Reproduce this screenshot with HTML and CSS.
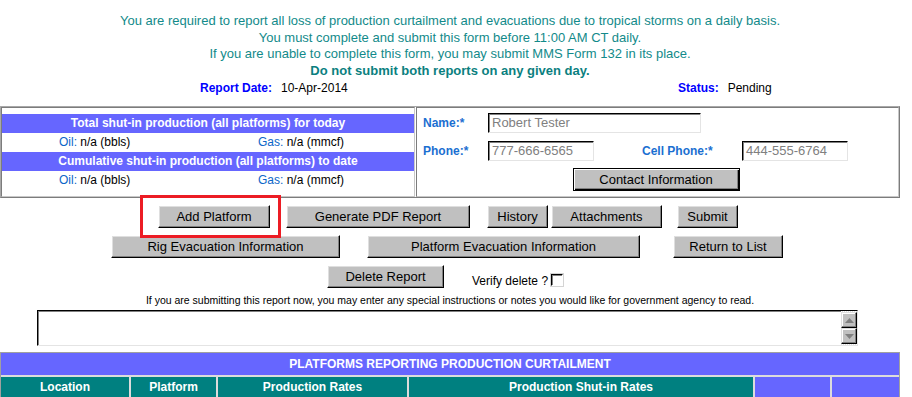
FILE: index.html
```html
<!DOCTYPE html>
<html>
<head>
<meta charset="utf-8">
<link rel="stylesheet" href="styles.css">
</head>
<body>
<div class="page">
  <div class="intro">
    <div>You are required to report all loss of production curtailment and evacuations due to tropical storms on a daily basis.</div>
    <div>You must complete and submit this form before 11:00 AM CT daily.</div>
    <div>If you are unable to complete this form, you may submit MMS Form 132 in its place.</div>
    <div class="strong">Do not submit both reports on any given day.</div>
  </div>

  <div class="meta">
    <div class="meta-left"><span class="meta-label">Report Date:</span><span class="meta-value">10-Apr-2014</span></div>
    <div><span class="meta-label">Status:</span><span class="meta-value">Pending</span></div>
  </div>

  <div class="summary">
    <div class="cell totals">
      <div class="band">Total shut-in production (all platforms) for today</div>
      <div class="amounts"><span class="amt"><span class="lbl">Oil:</span> n/a (bbls)</span><span class="amt"><span class="lbl">Gas:</span> n/a (mmcf)</span></div>
      <div class="band">Cumulative shut-in production (all platforms) to date</div>
      <div class="amounts"><span class="amt"><span class="lbl">Oil:</span> n/a (bbls)</span><span class="amt"><span class="lbl">Gas:</span> n/a (mmcf)</span></div>
    </div>
    <div class="cell contact">
      <div class="crow">
        <span class="clabel">Name:*</span>
        <span class="field w-name">Robert Tester</span>
      </div>
      <div class="crow crow2">
        <span class="clabel">Phone:*</span>
        <span class="field w-phone">777-666-6565</span>
        <span class="clabel cell-lbl">Cell Phone:*</span>
        <span class="field w-phone">444-555-6764</span>
      </div>
      <div class="crow crow3">
        <span class="btn btn-default w-contact">Contact Information</span>
      </div>
    </div>
  </div>

  <div class="actions">
    <div class="brow brow1">
      <span class="highlight"><span class="btn w-add">Add Platform</span></span>
      <span class="btn w-pdf g16">Generate PDF Report</span>
      <span class="btn w-hist g17">History</span>
      <span class="btn w-att g3">Attachments</span>
      <span class="btn w-sub g15">Submit</span>
    </div>
    <div class="brow brow2">
      <span class="btn w-rig">Rig Evacuation Information</span>
      <span class="btn w-plat g27">Platform Evacuation Information</span>
      <span class="btn w-ret g33">Return to List</span>
    </div>
    <div class="brow brow3">
      <span class="btn w-del">Delete Report</span>
      <span class="verify">Verify delete ?</span>
      <span class="checkbox"></span>
    </div>
  </div>

  <div class="notes-text">If you are submitting this report now, you may enter any special instructions or notes you would like for government agency to read.</div>
  <div class="notes">
    <div class="notes-area"></div>
    <div class="scroll">
      <span class="sbtn"><svg width="9" height="5" viewBox="0 0 9 5"><path d="M4.5 0L9 5H0z" fill="#808080"/></svg></span>
      <span class="sbtn"><svg width="9" height="5" viewBox="0 0 9 5"><path d="M0 0H9L4.5 5z" fill="#808080"/></svg></span>
    </div>
  </div>

  <div class="platforms">
    <div class="phead">PLATFORMS REPORTING PRODUCTION CURTAILMENT</div>
    <div class="col">Location</div>
    <div class="col">Platform</div>
    <div class="col">Production Rates</div>
    <div class="col">Production Shut-in Rates</div>
    <div class="col blank"></div>
    <div class="col blank"></div>
  </div>
</div>
</body>
</html>
```

FILE: styles.css
```css
* { box-sizing: border-box; }
html, body { margin: 0; padding: 0; background: #fff; }
body { font-family: "Liberation Sans", Arial, sans-serif; color: #000; }
.page { width: 900px; }

.intro {
  padding-top: 13px;
  text-align: center;
  font-size: 13px;
  line-height: 16.6px;
  color: #128a8a;
}
.intro .strong { font-weight: bold; color: #0b7f80; }

.meta {
  margin-top: 1px;
  display: grid;
  grid-template-columns: 678px auto;
  font-size: 12px;
  line-height: 16px;
}
.meta-left { padding-left: 200px; }
.meta-label { color: #0000ff; font-weight: bold; margin-right: 9px; }
.meta-value { color: #000; }

.summary {
  margin-top: 10px;
  display: flex;
  gap: 1px;
  border: 1px solid;
  border-color: #a8a8a8 #7c7c7c #7c7c7c #a8a8a8;
}
.cell {
  border: 1px solid;
  border-color: #7c7c7c #c8c8c8 #c8c8c8 #7c7c7c;
}
.totals {
  width: 414px;
  display: flex;
  flex-direction: column;
  justify-content: center;
  padding: 0;
}
.band {
  height: 19px;
  line-height: 19px;
  background: #6666ff;
  color: #fff;
  font-weight: bold;
  font-size: 12px;
  text-align: center;
}
.amounts {
  height: 19px;
  line-height: 19px;
  font-size: 12px;
  display: grid;
  grid-template-columns: 199px auto;
  padding-left: 57px;
}
.lbl { color: #0b66c8; }

.contact {
  flex: 1;
  padding: 5px 6px;
  height: 90px;
}
.crow { display: flex; align-items: center; height: 20px; }
.crow2 { margin-top: 8px; }
.crow3 { margin-top: 7px; height: 23px; justify-content: center; padding-right: 3px; }
.clabel {
  width: 65px;
  font-size: 12px;
  font-weight: bold;
  color: #1b6fd1;
}
.cell-lbl { margin-left: 48px; width: 100px; }
.field {
  height: 20px;
  border: 1px solid;
  border-color: #000 #e4e4e4 #e4e4e4 #000;
  box-shadow: inset 1px 1px 0 #808080;
  font-size: 13px;
  color: #808080;
  line-height: 18px;
  padding-left: 3px;
  white-space: nowrap;
  overflow: hidden;
}
.w-name { width: 213px; }
.w-phone { width: 106px; }

.btn {
  display: inline-flex;
  align-items: center;
  justify-content: center;
  height: 23px;
  background: #c0c0c0;
  border: 1px solid;
  border-color: #fff #000 #000 #fff;
  box-shadow: inset -1px -1px 0 #808080, inset 1px 1px 0 #dfdfdf;
  font-size: 13px;
  color: #000;
  white-space: nowrap;
  flex: none;
}
.btn-default {
  border: 1px solid #000;
  box-shadow: inset 1px 1px 0 #fff, inset -1px -1px 0 #000, inset -2px -2px 0 #808080;
}
.w-contact { width: 167px; }

.actions { margin-top: 7px; }
.brow { display: flex; align-items: center; height: 23px; }
.brow + .brow { margin-top: 7px; }
.brow1 { padding-left: 158px; }
.brow2 { padding-left: 111px; }
.brow3 { padding-left: 327px; }
.w-add { width: 112px; }
.w-pdf { width: 184px; }
.w-hist { width: 61px; }
.w-att { width: 111px; }
.w-sub { width: 61px; }
.w-rig { width: 229px; }
.w-plat { width: 273px; }
.w-ret { width: 110px; }
.w-del { width: 117px; }
.g3 { margin-left: 3px; }
.g15 { margin-left: 15px; }
.g16 { margin-left: 16px; }
.g17 { margin-left: 17px; }
.g27 { margin-left: 27px; }
.g33 { margin-left: 33px; }

.highlight { position: relative; display: inline-flex; }
.highlight::after {
  content: "";
  position: absolute;
  top: -10px;
  bottom: -10px;
  left: -18px;
  right: -11px;
  border: 3px solid #ec1c24;
  pointer-events: none;
}

.verify {
  margin-left: 28px;
  font-size: 12px;
  align-self: flex-end;
  line-height: 14px;
  margin-bottom: 0;
}
.checkbox {
  width: 12px;
  height: 12px;
  margin-left: 3px;
  align-self: flex-end;
  margin-bottom: 2px;
  border: 1px solid;
  border-color: #000 #fff #fff #000;
  box-shadow: 1px 1px 0 #808080 inset;
  outline: 1px solid #d4d4d4;
  background: #fff;
}

.notes-text {
  margin-top: 6px;
  text-align: center;
  font-size: 10.5px;
  line-height: 12px;
}
.notes {
  margin-top: 4px;
  margin-left: 37px;
  width: 821px;
  height: 36px;
  display: flex;
  border: 1px solid;
  border-color: #000 #e4e4e4 #e4e4e4 #000;
  box-shadow: inset 1px 1px 0 #808080;
  background: #fff;
}
.notes-area { flex: 1; }
.scroll {
  width: 16px;
  display: flex;
  flex-direction: column;
  justify-content: space-between;
  padding: 1px 0;
  background: repeating-conic-gradient(#e0e0e0 0 25%, #fff 0 50%) 0 0 / 2px 2px;
}
.sbtn {
  height: 16px;
  display: flex;
  align-items: center;
  justify-content: center;
  background: #c0c0c0;
  border: 1px solid;
  border-color: #dfdfdf #000 #000 #dfdfdf;
  box-shadow: inset -1px -1px 0 #808080, inset 1px 1px 0 #fff;
}

.platforms {
  margin-top: 6px;
  width: 900px;
  display: grid;
  grid-template-columns: 128px 85px 189px 344px 75px 1fr;
  gap: 2px;
  background: #dcdcdc;
  border: 1px solid #a0a0a0;
}
.phead {
  grid-column: 1 / -1;
  height: 22px;
  line-height: 22px;
  background: #6666ff;
  color: #fff;
  font-weight: bold;
  font-size: 12px;
  text-align: center;
}
.col {
  height: 22px;
  line-height: 20px;
  background: #008080;
  color: #fff;
  font-weight: bold;
  font-size: 12px;
  text-align: center;
}
.col.blank { background: #6666ff; }
```
